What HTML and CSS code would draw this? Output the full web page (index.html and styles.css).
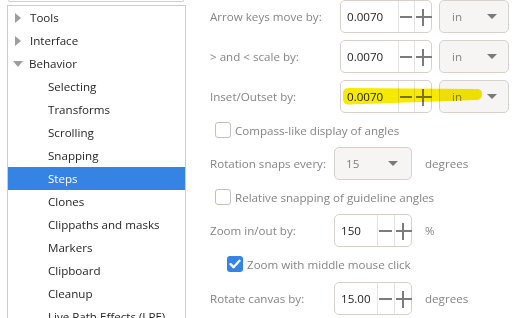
FILE: index.html
```html
<!DOCTYPE html>
<html lang="en">
<head>
  <meta charset="UTF-8" />
  <title>Preferences - Steps</title>
  <link rel="stylesheet" href="styles.css">
</head>
<body>
  <div class="page">
    <div class="sidebar">
      <div class="search-box"></div>
      <div class="tree">
        <div class="node"><span class="arrow right"></span>Tools</div>
        <div class="node"><span class="arrow right"></span>Interface</div>
        <div class="node"><span class="arrow down"></span>Behavior</div>
        <div class="node child">Selecting</div>
        <div class="node child">Transforms</div>
        <div class="node child">Scrolling</div>
        <div class="node child">Snapping</div>
        <div class="node child selected">Steps</div>
        <div class="node child">Clones</div>
        <div class="node child">Clippaths and masks</div>
        <div class="node child">Markers</div>
        <div class="node child">Clipboard</div>
        <div class="node child">Cleanup</div>
        <div class="node child">Live Path Effects (LPE)</div>
      </div>
    </div>

    <div class="settings">
      <div class="row">
        <span class="label wide">Arrow keys move by:</span>
        <div class="spin big"><span class="value">0.0070</span><span class="btn minus"></span><span class="btn plus"></span></div>
        <div class="combo unit"><span>in</span><span class="tri"></span></div>
      </div>
      <div class="row">
        <span class="label wide">&gt; and &lt; scale by:</span>
        <div class="spin big"><span class="value">0.0070</span><span class="btn minus"></span><span class="btn plus"></span></div>
        <div class="combo unit"><span>in</span><span class="tri"></span></div>
      </div>
      <div class="row">
        <span class="label wide">Inset/Outset by:</span>
        <div class="spin big"><span class="value">0.0070</span><span class="btn minus"></span><span class="btn plus"></span></div>
        <div class="combo unit"><span>in</span><span class="tri"></span></div>
      </div>

      <label class="check"><span class="box"></span>Compass-like display of angles</label>

      <div class="row">
        <span class="label">Rotation snaps every:</span>
        <div class="combo small"><span>15</span><span class="tri"></span></div>
        <span class="suffix">degrees</span>
      </div>

      <label class="check"><span class="box"></span>Relative snapping of guideline angles</label>

      <div class="row">
        <span class="label">Zoom in/out by:</span>
        <div class="spin small"><span class="value">150</span><span class="btn minus"></span><span class="btn plus"></span></div>
        <span class="suffix">%</span>
      </div>

      <label class="check indent"><span class="box checked"><svg width="16" height="16" viewBox="0 0 16 16"><path d="M3.5 8.2l3 3 6-6.4" fill="none" stroke="#fff" stroke-width="2.4" stroke-linecap="round" stroke-linejoin="round"/></svg></span>Zoom with middle mouse click</label>

      <div class="row">
        <span class="label">Rotate canvas by:</span>
        <div class="spin small"><span class="value">15.00</span><span class="btn minus"></span><span class="btn plus"></span></div>
        <span class="suffix">degrees</span>
      </div>
    </div>
  </div>

  <svg class="marker" width="526" height="318" viewBox="0 0 526 318">
    <path d="M343 93 Q343 88 349 88 L478 89 Q482 89.5 482 94 Q482 100 476 100 L350 104.5 Q343 105 343 99 Z" fill="#f6ea00"/>
  </svg>
</body>
</html>
```

FILE: styles.css
```css
body {
  margin: 0;
  background: #ffffff;
  font-family: "Open Sans", "Noto Sans", sans-serif;
  font-size: 11.6px;
  color: #2a2a2a;
  overflow: hidden;
  position: relative;
}

.page {
  display: flex;
  height: 318px;
}

/* left tree */
.sidebar {
  width: 186px;
  flex: none;
}

.search-box {
  margin: 0 2px 0 8px;
  height: 1px;
  border: 1px solid #d2d0ce;
  border-top: none;
  border-radius: 0 0 3px 3px;
}

.tree {
  margin: 3px 0 0 7px;
  border: 1px solid #cfcdcb;
  border-bottom: none;
  height: 320px;
}

.node {
  height: 23px;
  line-height: 23px;
  padding-left: 22px;
  display: flex;
  align-items: center;
  white-space: nowrap;
  color: #262626;
}

.node.child {
  padding-left: 40px;
}

.node.selected {
  background: #3584e4;
  color: #ffffff;
}

.arrow {
  width: 0;
  height: 0;
  margin-left: -15px;
  margin-right: 8px;
}

.arrow.right {
  border-top: 5px solid transparent;
  border-bottom: 5px solid transparent;
  border-left: 6px solid #9e9e9e;
  margin-right: 9px;
}

.arrow.down {
  border-left: 5.5px solid transparent;
  border-right: 5.5px solid transparent;
  border-top: 6px solid #9e9e9e;
  margin-left: -17px;
  margin-right: 6px;
}

/* right settings */
.settings {
  display: flex;
  flex-direction: column;
  padding-left: 24px;
  color: #858585;
}

.row {
  display: flex;
  align-items: center;
  height: 33px;
  margin-top: 7px;
}

.row:first-child {
  margin-top: 0;
}

.label {
  width: 124px;
  flex: none;
}

.label.wide {
  width: 130px;
}

.spin {
  display: flex;
  height: 31px;
  border: 1px solid #d6d1cc;
  border-radius: 5px;
  background: #ffffff;
}

.spin .value {
  color: #1e1e1e;
  padding-left: 6px;
  display: flex;
  align-items: center;
  border-right: 1px solid #e4e1de;
}

.spin.big {
  width: 90px;
}

.spin.big .value {
  width: 52px;
}

.spin.small {
  width: 76px;
}

.spin.small .value {
  width: 36px;
}

.btn {
  position: relative;
  width: 16px;
}

.btn.minus {
  border-right: 1px solid #e4e1de;
}

.btn::before,
.btn.plus::after {
  content: "";
  position: absolute;
  background: #7c7c7c;
}

.btn::before {
  left: 1px;
  right: 2px;
  top: 15px;
  height: 2px;
}

.btn.plus::before {
  left: 1px;
  right: -1px;
}

.btn.plus::after {
  left: 7px;
  width: 2px;
  top: 8px;
  height: 17px;
}

.combo {
  display: flex;
  align-items: center;
  justify-content: space-between;
  height: 31px;
  border: 1px solid #d6d1cc;
  border-radius: 5px;
  background: #f6f5f4;
  color: #8c8488;
}

.combo.unit {
  width: 45px;
  margin-left: 7px;
  padding: 0 11px 0 12px;
}

.combo.small {
  width: 52px;
  padding: 0 13px 0 11px;
  color: #7e7e7e;
}

.tri {
  width: 0;
  height: 0;
  border-left: 5px solid transparent;
  border-right: 5px solid transparent;
  border-top: 5px solid #7a7a7a;
}

.suffix {
  margin-left: 13px;
}

.check {
  display: flex;
  align-items: center;
  height: 16px;
  margin-top: 9px;
  margin-left: 5px;
  gap: 4px;
}

.check + .row {
  margin-top: 9px;
}

.check.indent {
  margin-left: 17px;
}

.check.indent + .row {
  margin-top: 10px;
}

.box {
  width: 14px;
  height: 14px;
  border: 1px solid #c6c0bb;
  border-radius: 3px;
  background: #ffffff;
  flex: none;
}

.box.checked {
  width: 16px;
  height: 16px;
  border: none;
  background: #3584e4;
  display: flex;
}

.marker {
  position: absolute;
  left: 0;
  top: 0;
  mix-blend-mode: multiply;
  pointer-events: none;
}
```
